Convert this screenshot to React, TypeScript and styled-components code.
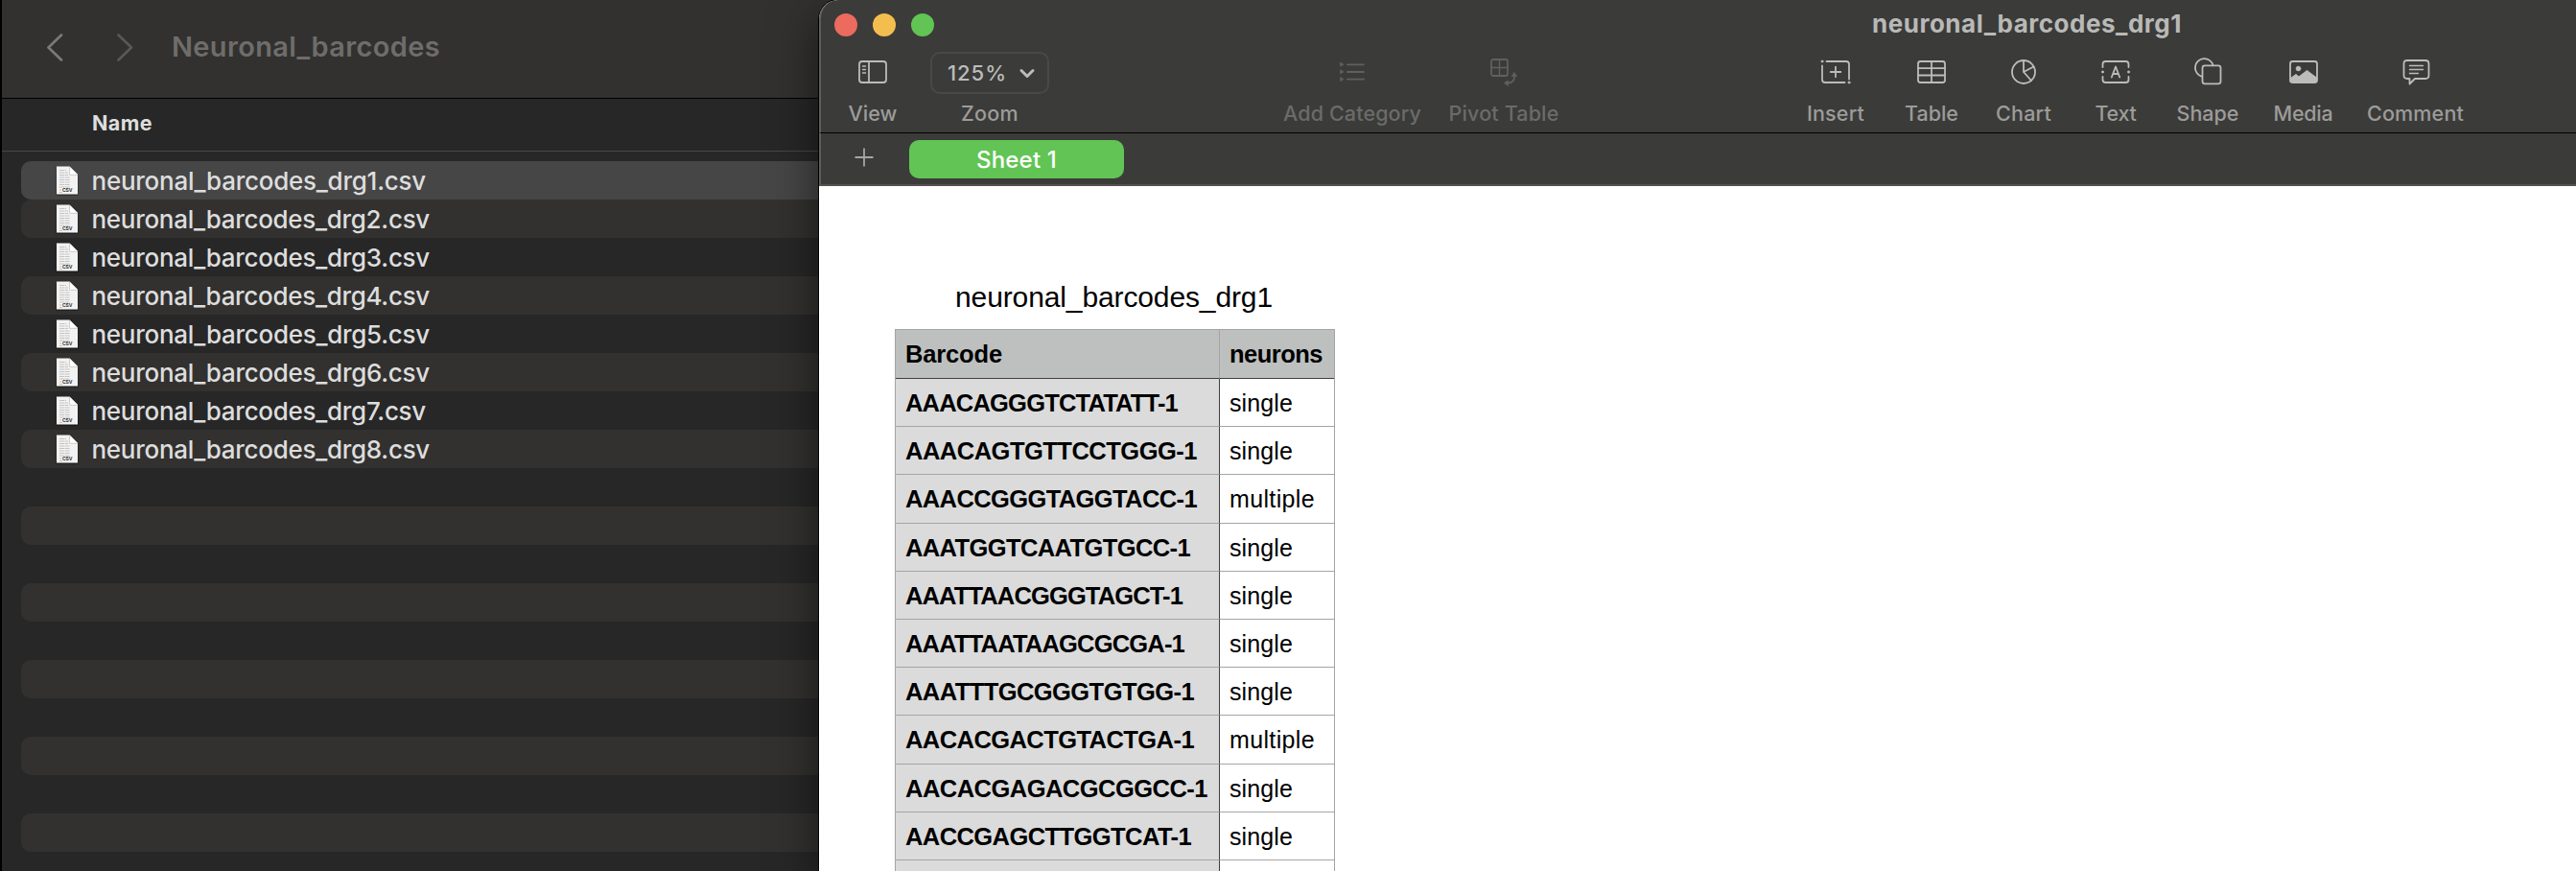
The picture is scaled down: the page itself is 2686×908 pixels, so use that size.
import React from 'react';
import styled, { createGlobalStyle } from 'styled-components';

const Global = createGlobalStyle`
  * { box-sizing: border-box; }
  body { margin: 0; background: #000; overflow: hidden; }
`;

const Desktop = styled.div`
  display: flex;
  width: 2686px;
  height: 908px;
  overflow: hidden;
  background: #000;
  padding-left: 2px;
  font-family: Inter, 'Liberation Sans', sans-serif;
`;

const Finder = styled.section`
  width: 852px;
  flex: none;
  height: 908px;
  background: #272727;
`;

const FinderBar = styled.header`
  height: 103px;
  background: #32312f;
  border-bottom: 1px solid #000;
  display: flex;
  align-items: center;
  padding: 0 0 4px 47px;
  margin-right: -20px;
`;

const Chevron = styled.svg<{ $gap: number }>`
  width: 17px;
  height: 29px;
  flex: none;
  margin-right: ${p => p.$gap}px;
  fill: none;
  stroke-width: 2.7;
  stroke-linecap: round;
  stroke-linejoin: round;
`;

const Label = styled.span<{ $size: number; $w: number; $weight?: number; $color: string }>`
  display: block;
  width: ${p => p.$w}px;
  font-size: ${p => p.$size}px;
  font-weight: ${p => p.$weight ?? 400};
  color: ${p => p.$color};
  white-space: pre;
  line-height: 1.2;
`;

const ColumnHead = styled.div`
  height: 55px;
  padding: 0 0 3px 94px;
  border-bottom: 1px solid #474747;
  display: flex;
  align-items: center;
`;

const FileList = styled.div`
  padding: 10px 0 0 20px;
`;

const FileRow = styled.div<{ $tone: string }>`
  height: 40px;
  border-radius: 10px 0 0 10px;
  background: ${p => p.$tone};
  display: flex;
  align-items: center;
  padding: 1px 0 0 35px;
  gap: 14.5px;
`;

const Sheet = styled.section`
  flex: 1;
  height: 908px;
  background: #fff;
  border-radius: 20px 0 0 0;
  position: relative;
  box-shadow: 0 0 0 1px #000, 0 16px 50px rgba(0, 0, 0, 0.55);
`;

const Chrome = styled.header`
  height: 138px;
  background: #3b3b39;
  border-left: 2px solid #5e5e5c;
  border-top-left-radius: 20px;
`;

const TitleRow = styled.div`
  height: 52px;
  display: flex;
  align-items: center;
  padding-left: 14px;
`;

const Light = styled.i<{ $c: string }>`
  width: 24px;
  height: 24px;
  border-radius: 50%;
  background: ${p => p.$c};
  margin-right: 16px;
`;

const WindowTitle = styled.div`
  margin-left: 962px;
  padding-bottom: 2px;
`;

const Tools = styled.div`
  display: flex;
  height: 85px;
`;

const Tool = styled.div<{ $w: number; $gap?: number; $off?: boolean }>`
  width: ${p => p.$w}px;
  margin-left: ${p => p.$gap ?? 0}px;
  flex: none;
  display: flex;
  flex-direction: column;
  align-items: center;
  color: ${p => (p.$off ? '#60605e' : '#bcbcba')};
`;

const IconBox = styled.div`
  height: 50px;
  display: flex;
  align-items: center;
  padding-bottom: 4px;
  svg { width: 36px; height: 36px; fill: none; stroke: currentColor; stroke-width: 1.8; stroke-linecap: round; stroke-linejoin: round; overflow: visible; }
`;

const ToolText = styled.div`
  height: 30px;
  display: flex;
  align-items: center;
  padding-top: 3px;
`;

const ZoomBox = styled.div`
  width: 124px;
  height: 44px;
  margin: 2px 0 4px;
  border: 2px solid #494947;
  border-radius: 10px;
  display: flex;
  align-items: center;
  padding-left: 16px;
  gap: 14px;
  svg { width: 14px; height: 9px; fill: none; stroke: #bcbcba; stroke-width: 3; stroke-linecap: round; stroke-linejoin: round; overflow: visible; }
`;

const Tabs = styled.div`
  height: 56px;
  background: #3b3b39;
  border-top: 1px solid #000;
  border-left: 2px solid #5e5e5c;
  border-bottom: 2px solid #555151;
  display: flex;
  padding: 7px 0 0 35px;
`;

const AddTab = styled.svg`
  width: 20px;
  height: 20px;
  margin: 8px 37px 0 0;
  stroke: #a5a5a3;
  stroke-width: 1.8;
`;

const Tab = styled.div`
  width: 224px;
  height: 40px;
  border-radius: 10px;
  background: #61c454;
  display: flex;
  align-items: center;
  justify-content: center;
  padding-top: 2px;
`;

const Canvas = styled.div`
  padding: 97px 0 0 79px;
  height: 714px;
  overflow: hidden;
  font-family: 'Liberation Sans', Arial, sans-serif;
  width: 538px;
`;

const TableTitle = styled.div`
  height: 52px;
  display: flex;
  justify-content: center;
  padding: 1px 2px 0 0;
`;

const Grid = styled.div`
  border-top: 1px solid #a3a4a3;
  border-left: 1px solid #a3a4a3;
  border-right: 1px solid #a3a4a3;
  width: 459px;
`;

const GridRow = styled.div<{ $h: number }>`
  display: grid;
  grid-template-columns: 338px 119px;
  height: ${p => p.$h}px;
`;

const Cell = styled.div<{ $bg: string; $right?: string; $bottom: string; $nudge?: number }>`
  background: ${p => p.$bg};
  border-bottom: 1px solid ${p => p.$bottom};
  border-right: ${p => (p.$right ? `1px solid ${p.$right}` : '0')};
  padding: ${p => p.$nudge ?? 0}px 0 0 10px;
  display: flex;
  align-items: center;
`;

type FitProps = { children: string; size: number; w: number; weight?: number; color: string };

/* Text set to an exact advance width through letter spacing. */
function Fit({ children, size, w, weight, color }: FitProps) {
  const ref = React.useRef<HTMLSpanElement>(null);
  const [spacing, setSpacing] = React.useState(0);
  React.useLayoutEffect(() => {
    const el = ref.current;
    if (!el) return;
    const range = document.createRange();
    range.selectNodeContents(el);
    el.style.letterSpacing = '0px';
    const next = (w - range.getBoundingClientRect().width) / children.length;
    el.style.letterSpacing = next + 'px';
    setSpacing(next);
  }, [children, w, size]);
  return (
    <Label ref={ref} $size={size} $w={w} $weight={weight} $color={color} style={{ letterSpacing: spacing }}>
      {children}
    </Label>
  );
}

const CsvSvg = styled.svg`
  width: 24px;
  height: 32px;
  flex: none;
  overflow: visible;
`;

const CsvIcon = () => (
  <CsvSvg viewBox="0 0 24 32">
    <path d="M1.500 3h14.500l8.500 8v20h-23z" fill="#000" opacity=".3" />
    <path d="M2 .5h13.500L24 9V29.500H2z" fill="#f2f2f2" />
    <path d="M5 4.500h7M5 7h9M5 9.500h9M5 12h11M5 14.500h11M5 17h11M5 19.500h11M5 22h11M5 25h2M5 27.500h3" stroke="#c4c4c4" strokeWidth="1.200" strokeDasharray="5 .6" />
    <path d="M15.500 .5 24 9h-8.500z" fill="#fff" />
    <path d="M15.500 1v8.300H24" stroke="#c4c4c4" strokeWidth=".8" fill="none" />
    <text x="8" y="27" fontSize="5" fontWeight="700" fill="#333" fontFamily="Inter, sans-serif" textLength="10.500">CSV</text>
  </CsvSvg>
);

const icons: Record<string, React.ReactNode> = {
  View: (<><rect x="4" y="7" width="28" height="22" rx="3" /><path d="M14 7v22" /><path d="M7.500 12h3M7.500 15.500h3M7.500 19h3" strokeWidth="1.400" /></>),
  'Add Category': (<><path d="M13 10.300h17M13 18h17M13 25.700h17" /><path d="M5.500 8.300v4l3.500-2zM5.500 16v4l3.500-2zM5.500 23.700v4l3.500-2z" fill="currentColor" strokeWidth=".6" /></>),
  'Pivot Table': (<><rect x="5" y="5" width="17" height="17" rx="2" /><path d="M13.500 5v17M5 13.500h17" strokeWidth="1.400" /><path d="M29 22v1q0 6-6 6.500h-1" /><path d="m29 18.500 2.700 4h-5.400zM18.500 29.500l4-2.700v5.400z" fill="currentColor" strokeWidth=".6" /></>),
  Insert: (<><path d="M8.500 7H29q3 0 3 3v15.500M4 11.500V26q0 3 3 3h20.500" /><circle cx="4" cy="7" r="1" fill="currentColor" strokeWidth="1" /><circle cx="32" cy="29" r="1" fill="currentColor" strokeWidth="1" /><path d="M18 12.700v10.600M12.700 18h10.600" /></>),
  Table: (<><rect x="4" y="7" width="28" height="22" rx="2.500" /><path d="M18 7v22M4 14.200h28M4 21.500h28" /></>),
  Chart: (<><circle cx="18" cy="18" r="12" /><path d="M18 6v12l10.500-5.500M18 18l8 9" /></>),
  Text: (<><path d="M4.500 13v-3q0-3 3-3h21q3 0 3 3v3M4.500 23v3q0 3 3 3h21q3 0 3-3v-3" /><circle cx="4.500" cy="18" r="1" fill="currentColor" strokeWidth="1" /><circle cx="31.500" cy="18" r="1" fill="currentColor" strokeWidth="1" /><path d="M13.800 23.500 18 12.500l4.200 11M15.200 20h5.600" /></>),
  Shape: (<><rect x="12.500" y="11.300" width="19" height="19" rx="2.500" /><path d="M12 22.800a9.500 9.500 0 1 1 11.600-11.500" /></>),
  Media: (<><rect x="4" y="7" width="28" height="22" rx="2.500" /><circle cx="12.500" cy="14.500" r="2.500" fill="currentColor" strokeWidth=".5" /><path d="M4.500 24.500 10 20.500l3 2.500 8.500-6.500L31.500 24v4.500h-27z" fill="currentColor" strokeWidth="1" /></>),
  Comment: (<><path d="M9 6h19q3.500 0 3.500 3.500v12q0 3.500-3.500 3.500H17l-5.500 5.500V25H9q-3.500 0-3.500-3.500v-12Q5.500 6 9 6z" /><path d="M11.500 11.500h14M11.500 15.500h14M11.500 19.500h9" strokeWidth="1.400" /></>),
};

const rows: [string, number, string][] = [
  ['AAACAGGGTCTATATT-1', 284, 'single'],
  ['AAACAGTGTTCCTGGG-1', 304, 'single'],
  ['AAACCGGGTAGGTACC-1', 304, 'multiple'],
  ['AAATGGTCAATGTGCC-1', 297, 'single'],
  ['AAATTAACGGGTAGCT-1', 289, 'single'],
  ['AAATTAATAAGCGCGA-1', 291, 'single'],
  ['AAATTTGCGGGTGTGG-1', 301, 'single'],
  ['AACACGACTGTACTGA-1', 301, 'multiple'],
  ['AACACGAGACGCGGCC-1', 315, 'single'],
  ['AACCGAGCTTGGTCAT-1', 298, 'single'],
];
const heights = [50, 50, 51, 50, 50, 50, 50, 51, 50, 50];

const tools: { name: string; w: number; gap: number; off?: boolean }[] = [
  { name: 'Add Category', w: 144, gap: 244, off: true },
  { name: 'Pivot Table', w: 115, gap: 28.5, off: true },
  { name: 'Insert', w: 60, gap: 258.5 },
  { name: 'Table', w: 56, gap: 42 },
  { name: 'Chart', w: 58, gap: 39 },
  { name: 'Text', w: 43, gap: 45.5 },
  { name: 'Shape', w: 65, gap: 42 },
  { name: 'Media', w: 62, gap: 36 },
  { name: 'Comment', w: 101, gap: 35.5 },
];

export default function App() {
  return (
    <Desktop>
      <Global />
      <Finder>
        <FinderBar>
          <Chevron $gap={56} viewBox="0 0 17 29" stroke="#7a7977"><path d="M15 1.500 1.500 14.500l13.500 13" /></Chevron>
          <Chevron $gap={40} viewBox="0 0 17 29" stroke="#595856"><path d="M1.500 1.500 15 14.500l-13.500 13" /></Chevron>
          <Fit size={29} w={280} weight={600} color="#6e6d6b">Neuronal_barcodes</Fit>
        </FinderBar>
        <ColumnHead><Fit size={21.5} w={63} weight={700} color="#dedede">Name</Fit></ColumnHead>
        <FileList>
          {Array.from({ length: 18 }, (_, i) => (
            <FileRow key={i} $tone={i === 0 ? '#464646' : i % 2 ? '#32312f' : 'transparent'}>
              {i < 8 && (<><CsvIcon /><Fit size={26} w={i === 0 || i === 6 ? 348.5 : 352.5} weight={500} color="#dddddd">{`neuronal_barcodes_drg${i + 1}.csv`}</Fit></>)}
            </FileRow>
          ))}
        </FileList>
      </Finder>
      <Sheet>
        <Chrome>
          <TitleRow>
            <Light $c="#ec6a5e" /><Light $c="#f4be4f" /><Light $c="#61c454" />
            <WindowTitle><Fit size={26} w={323} weight={700} color="#b9b9b7">neuronal_barcodes_drg1</Fit></WindowTitle>
          </TitleRow>
          <Tools>
            <Tool $w={51} $gap={28.5}>
              <IconBox><svg viewBox="0 0 36 36">{icons.View}</svg></IconBox>
              <ToolText><Fit size={21.5} w={51} weight={500} color="#9c9c9a">View</Fit></ToolText>
            </Tool>
            <Tool $w={124} $gap={34.5}>
              <ZoomBox><Fit size={22} w={62} weight={500} color="#bcbcba">125%</Fit><svg viewBox="0 0 14 9"><path d="m1 1.500 6 6 6-6" /></svg></ZoomBox>
              <ToolText><Fit size={21.5} w={60} weight={500} color="#9c9c9a">Zoom</Fit></ToolText>
            </Tool>
            {tools.map(t => (
              <Tool key={t.name} $w={t.w} $gap={t.gap} $off={t.off}>
                <IconBox><svg viewBox="0 0 36 36">{icons[t.name]}</svg></IconBox>
                <ToolText><Fit size={21.5} w={t.w} weight={500} color={t.off ? '#6b6b69' : '#9c9c9a'}>{t.name}</Fit></ToolText>
              </Tool>
            ))}
          </Tools>
        </Chrome>
        <Tabs>
          <AddTab viewBox="0 0 20 20"><path d="M10 .5v19M.5 10h19" /></AddTab>
          <Tab><Fit size={24} w={84} weight={500} color="#fff">Sheet 1</Fit></Tab>
        </Tabs>
        <Canvas>
          <TableTitle><Fit size={30} w={331} color="#000">neuronal_barcodes_drg1</Fit></TableTitle>
          <Grid>
            <GridRow $h={51}>
              <Cell $bg="#bdc0bf" $right="#a3a4a3" $bottom="#3f3f3f"><Fit size={25.5} w={101} weight={700} color="#000">Barcode</Fit></Cell>
              <Cell $bg="#bdc0bf" $bottom="#3f3f3f"><Fit size={25.5} w={97} weight={700} color="#000">neurons</Fit></Cell>
            </GridRow>
            {rows.map(([code, w, kind], i) => (
              <GridRow key={code} $h={heights[i]}>
                <Cell $bg="#dbdbdb" $right="#3f3f3f" $bottom="#a5a5a5" $nudge={heights[i] === 50 ? 2 : 0}><Fit size={25.5} w={w} weight={700} color="#000">{code}</Fit></Cell>
                <Cell $bg="#fff" $bottom="#a5a5a5"><Fit size={25} w={kind === 'single' ? 66 : 89} color="#000">{kind}</Fit></Cell>
              </GridRow>
            ))}
            <GridRow $h={51}>
              <Cell $bg="#dbdbdb" $right="#3f3f3f" $bottom="#a5a5a5" />
              <Cell $bg="#fff" $bottom="#a5a5a5" />
            </GridRow>
          </Grid>
        </Canvas>
      </Sheet>
    </Desktop>
  );
}
